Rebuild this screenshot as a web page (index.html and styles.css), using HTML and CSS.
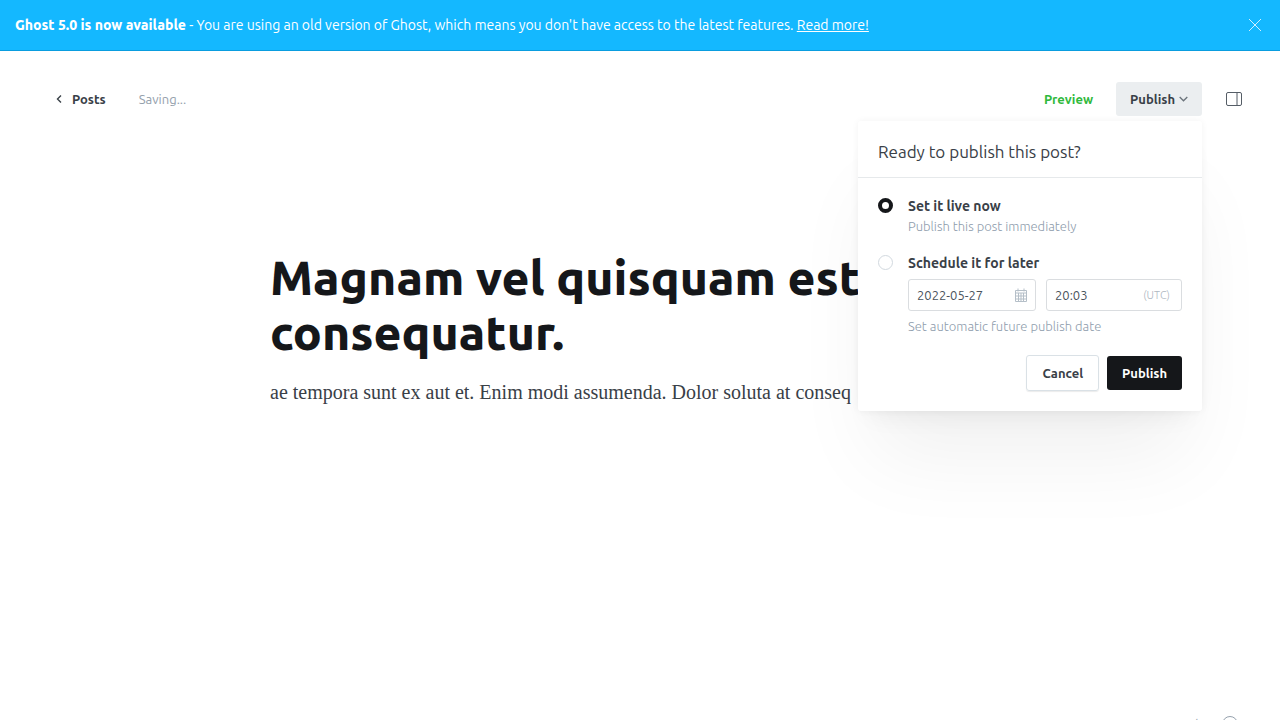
FILE: index.html
```html
<!DOCTYPE html>
<html lang="en">
<head>
<meta charset="utf-8">
<title>Post editor - Ghost</title>
<link rel="stylesheet" href="styles.css">
</head>
<body>
<div class="app">
  <aside class="banner">
    <p class="banner-text"><strong>Ghost 5.0 is now available</strong> - You are using an old version of Ghost, which means you don't have access to the latest features. <a href="#">Read more!</a></p>
    <button class="icon-button banner-close" type="button" aria-label="Close">
      <svg width="12" height="12" viewBox="0 0 12 12"><path d="M0 0l12 12M12 0L0 12"/></svg>
    </button>
  </aside>
  <header class="toolbar">
    <nav class="toolbar-left">
      <a class="back" href="#"><svg width="6" height="8" viewBox="0 0 6 8"><path d="M5 .5L1.500 4 5 7.500"/></svg>Posts</a>
      <span class="status">Saving...</span>
    </nav>
    <div class="toolbar-right">
      <button class="preview" type="button">Preview</button>
      <div class="publish-menu">
        <button class="trigger" type="button" aria-expanded="true">Publish<svg width="9" height="6" viewBox="0 0 9 6"><path d="M.7 1l3.800 3.800L8.300 1"/></svg></button>
        <form class="dropdown">
          <h2 class="dropdown-title">Ready to publish this post?</h2>
          <div class="options">
            <div class="option">
              <input class="radio" type="radio" name="when" id="now" checked>
              <div class="option-body">
                <label class="option-label" for="now">Set it live now</label>
                <p class="hint">Publish this post immediately</p>
              </div>
            </div>
            <div class="option">
              <input class="radio" type="radio" name="when" id="later">
              <div class="option-body">
                <label class="option-label" for="later">Schedule it for later</label>
                <div class="fields">
                  <div class="field field-date">
                    <input type="text" value="2022-05-27" aria-label="Publish date">
                    <svg width="12" height="14" viewBox="0 0 12 14"><path d="M.5 2.500h11v11H.5zM.5 5h11M.5 8h11M.5 11h11M3.500 5v8.500M6 5v8.500M8.500 5v8.500M3 .5v3M9 .5v3"/></svg>
                  </div>
                  <div class="field field-time">
                    <input type="text" value="20:03" aria-label="Publish time">
                    <span class="zone">(UTC)</span>
                  </div>
                </div>
                <p class="hint">Set automatic future publish date</p>
              </div>
            </div>
          </div>
          <div class="actions">
            <button class="button button-plain" type="button">Cancel</button>
            <button class="button button-dark" type="button">Publish</button>
          </div>
        </form>
      </div>
      <button class="icon-button sidebar-toggle" type="button" aria-label="Settings">
        <svg width="16" height="14" viewBox="0 0 16 14"><rect x=".5" y=".5" width="15" height="13" rx="1.500"/><path d="M11 .5v13"/></svg>
      </button>
    </div>
  </header>
  <main class="editor">
    <h1 class="post-title">Magnam vel quisquam est consequatur.</h1>
    <p class="post-body">ae tempora sunt ex aut et. Enim modi assumenda. Dolor soluta at conseq</p>
  </main>
  <footer class="footer">
    <span>45 words</span>
    <a href="#" aria-label="Help"><svg width="16" height="16" viewBox="0 0 16 16"><circle cx="8" cy="8" r="7.500"/><path d="M6 6.500a2 2 0 1 1 3 1.700c-.7.400-1 .8-1 1.600M8 11.500v1"/></svg></a>
  </footer>
</div>
</body>
</html>
```
FILE: styles.css
```css
* { box-sizing: border-box; }

body {
  margin: 0;
  overflow: hidden;
  background: #fff;
  color: #394047;
  font-family: Ubuntu, "Noto Sans", "Open Sans", sans-serif;
  font-size: 13px;
}

h1, h2, p { margin: 0; }

button, input { font: inherit; color: inherit; }

button {
  margin: 0;
  padding: 0;
  border: 0;
  background: none;
  cursor: pointer;
}

svg { display: block; fill: none; stroke: currentColor; }

.app {
  position: relative;
  display: flex;
  flex-direction: column;
  min-height: 100vh;
}

.banner {
  display: flex;
  align-items: center;
  justify-content: space-between;
  padding: 15px 19px 15px 15px;
  border-bottom: 1px solid #0a9ddf;
  background: #14b8ff;
  color: #fff;
}

.banner-text { font-size: 14px; line-height: 20px; }
.banner-text strong { font-weight: 800; }
.banner-text a { color: inherit; }
.icon-button { display: flex; }
.banner-close svg { opacity: .8; }

.toolbar {
  display: flex;
  align-items: center;
  justify-content: space-between;
  padding: 31px 38px 0 56px;
}

.toolbar-left, .toolbar-right { display: flex; align-items: center; }
.toolbar-left { gap: 33px; }

.back {
  display: flex;
  align-items: center;
  gap: 10px;
  color: inherit;
  font-weight: 600;
  text-decoration: none;
}

.back svg { stroke-width: 1.4; }
.status { color: #95a1ad; }
.preview { margin-right: 23px; color: #30b93c; font-weight: 600; }
.publish-menu { position: relative; margin-right: 24px; }

.trigger {
  display: flex;
  align-items: center;
  gap: 4px;
  height: 34px;
  padding: 0 14px;
  border-radius: 3px;
  background: #ebeef0;
  font-weight: 600;
}

.trigger svg { color: #6b737b; stroke-width: 1.3; }
.sidebar-toggle { color: #555d66; }

.dropdown {
  position: absolute;
  top: calc(100% + 5px);
  right: 0;
  z-index: 2;
  width: 344px;
  border-radius: 3px;
  background: #fff;
  box-shadow: 0 0 7px rgba(0, 0, 0, .05), 0 16px 24px -12px rgba(0, 0, 0, .06), 0 60px 80px -15px rgba(0, 0, 0, .06);
}

.dropdown-title {
  padding: 20px 20px 14px;
  border-bottom: 1px solid #e6e9eb;
  font-size: 17px;
  font-weight: 400;
  line-height: 22px;
}

.options {
  display: flex;
  flex-direction: column;
  gap: 16px;
  padding: 18px 20px 0;
}

.option { display: flex; gap: 15px; }

.radio {
  appearance: none;
  flex: none;
  width: 15px;
  height: 15px;
  margin: 2px 0 0;
  border: 1px solid #d2d9df;
  border-radius: 50%;
  background: #fff;
}

.radio:checked { border: 4px solid #15171a; }
.option-body { flex: 1; min-width: 0; }

.option-label {
  display: block;
  font-size: 14px;
  font-weight: 600;
  line-height: 20px;
}

.hint { color: #8e9cac; font-weight: 300; line-height: 21px; }

.fields {
  display: grid;
  grid-template-columns: 128px minmax(0, 1fr);
  gap: 10px;
  padding: 6px 0 5px;
}

.field {
  display: flex;
  align-items: center;
  height: 32px;
  border: 1px solid #dadde0;
  border-radius: 3px;
}

.field-date { padding: 0 8px; color: #4a535c; }
.field-time { padding: 0 11px 0 8px; color: #4a535c; }
.field svg { flex: none; color: #b5bfc8; }

.field input {
  flex: 1;
  min-width: 0;
  padding: 0;
  border: 0;
  outline: 0;
  background: none;
}

.zone { color: #aeb7c1; font-size: 11px; font-weight: 300; }

.actions {
  display: flex;
  align-items: center;
  justify-content: flex-end;
  gap: 8px;
  padding: 18px 20px 20px;
}

.button {
  height: 34px;
  padding: 0 15px;
  border-radius: 3px;
  font-weight: 600;
}

.button-plain {
  height: 36px;
  border: 1px solid #dae1e6;
  box-shadow: 0 1px 1px rgba(0, 0, 0, .08);
}

.button-dark { background: #15171a; color: #fff; }

.editor {
  width: 100%;
  max-width: 788px;
  margin: 0 auto;
  padding: 134px 24px 0;
}

.post-title {
  color: #15171a;
  font-size: 48px;
  font-weight: 800;
  line-height: 55px;
}

.post-body {
  margin-top: 18px;
  font-family: "Liberation Serif", serif;
  font-size: 20px;
  line-height: 28px;
}

.footer {
  position: absolute;
  right: 42px;
  bottom: -14px;
  display: flex;
  align-items: center;
  gap: 18px;
  color: #95a1ad;
  line-height: 20px;
}

.footer a { color: inherit; }
```
